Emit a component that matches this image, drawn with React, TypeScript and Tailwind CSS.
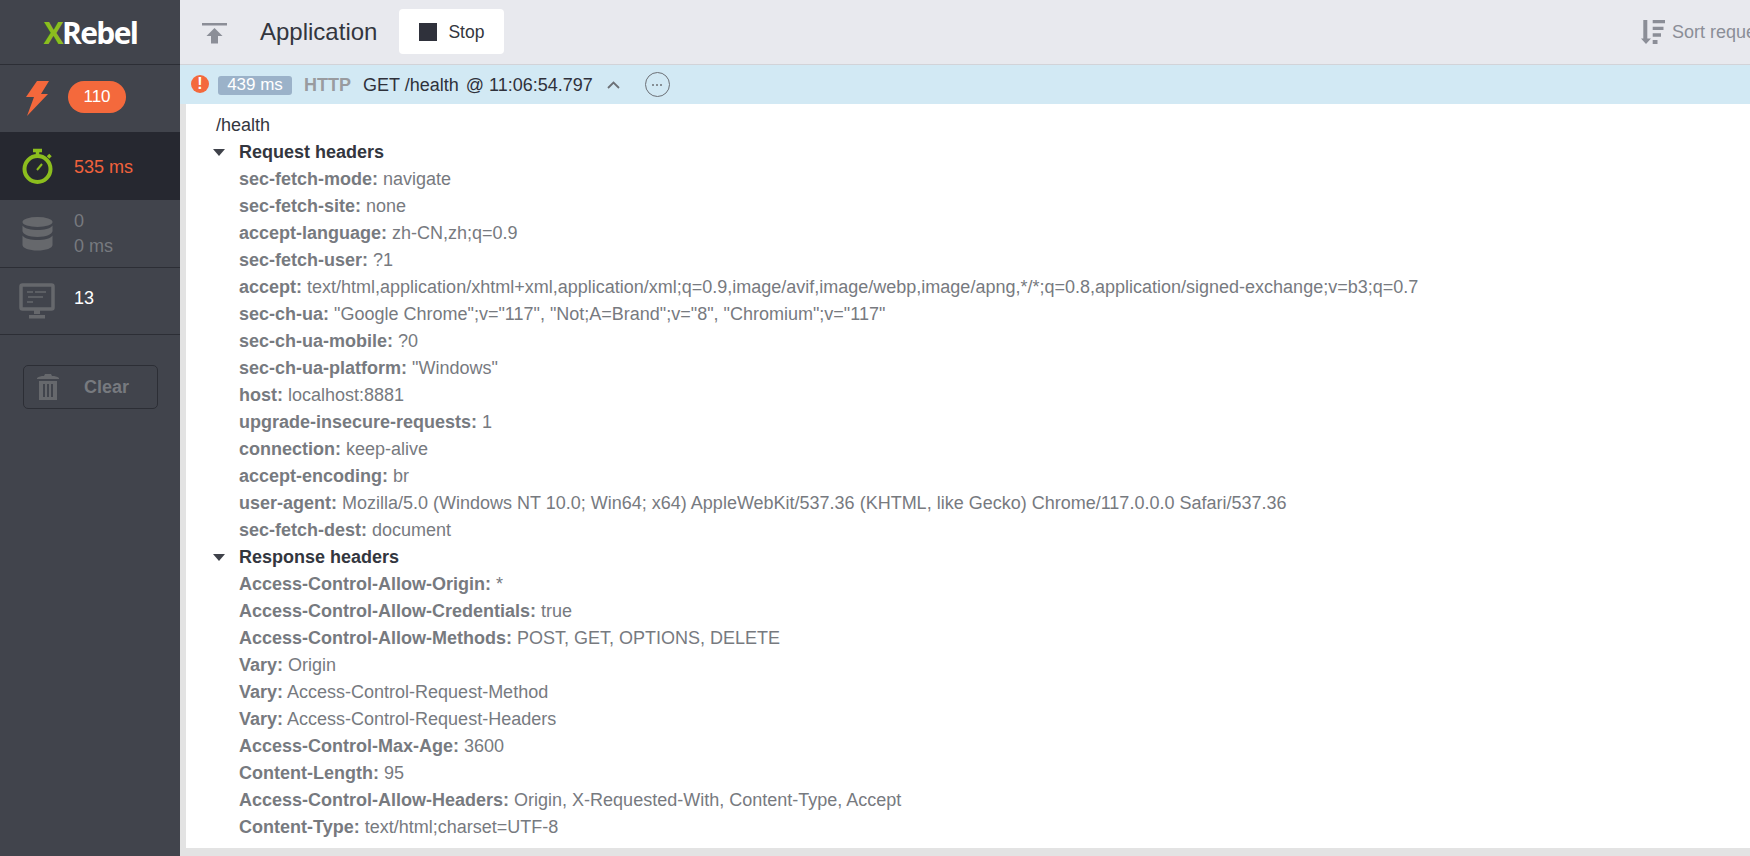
import type { ReactNode } from "react";

const requestHeaders: [string, string][] = [
  ["sec-fetch-mode", "navigate"],
  ["sec-fetch-site", "none"],
  ["accept-language", "zh-CN,zh;q=0.9"],
  ["sec-fetch-user", "?1"],
  ["accept", "text/html,application/xhtml+xml,application/xml;q=0.9,image/avif,image/webp,image/apng,*/*;q=0.8,application/signed-exchange;v=b3;q=0.7"],
  ["sec-ch-ua", "\"Google Chrome\";v=\"117\", \"Not;A=Brand\";v=\"8\", \"Chromium\";v=\"117\""],
  ["sec-ch-ua-mobile", "?0"],
  ["sec-ch-ua-platform", "\"Windows\""],
  ["host", "localhost:8881"],
  ["upgrade-insecure-requests", "1"],
  ["connection", "keep-alive"],
  ["accept-encoding", "br"],
  ["user-agent", "Mozilla/5.0 (Windows NT 10.0; Win64; x64) AppleWebKit/537.36 (KHTML, like Gecko) Chrome/117.0.0.0 Safari/537.36"],
  ["sec-fetch-dest", "document"],
];

const responseHeaders: [string, string][] = [
  ["Access-Control-Allow-Origin", "*"],
  ["Access-Control-Allow-Credentials", "true"],
  ["Access-Control-Allow-Methods", "POST, GET, OPTIONS, DELETE"],
  ["Vary", "Origin"],
  ["Vary", "Access-Control-Request-Method"],
  ["Vary", "Access-Control-Request-Headers"],
  ["Access-Control-Max-Age", "3600"],
  ["Content-Length", "95"],
  ["Access-Control-Allow-Headers", "Origin, X-Requested-With, Content-Type, Accept"],
  ["Content-Type", "text/html;charset=UTF-8"],
];

function HeaderGroup({ title, rows }: { title: string; rows: [string, string][] }) {
  return (
    <div>
      <div className="flex h-[27px] items-center">
        <svg width="12" height="7" viewBox="0 0 12 7" className="ml-[27px] mr-[14px]">
          <path d="M0 0h12L6 7z" fill="#3f424a" />
        </svg>
        <span className="font-bold text-[#33363e]">{title}</span>
      </div>
      {rows.map(([k, v], i) => (
        <div key={i} className="h-[27px] whitespace-nowrap pl-[53px] leading-[27px] text-[#777a7f]">
          <b>{k}:</b> {v}
        </div>
      ))}
    </div>
  );
}

function SideRow({ children, className }: { children: ReactNode; className: string }) {
  return <div className={`flex shrink-0 items-center ${className}`}>{children}</div>;
}

export default function App() {
  return (
    <div className="flex h-[856px] w-[1750px] overflow-hidden bg-[#e3e3e3] font-['Liberation_Sans',Arial,sans-serif] text-[18px]">
      <aside className="flex w-[180px] shrink-0 flex-col bg-[#41444c]">
        <div className="flex h-[65px] shrink-0 items-center justify-center border-b border-[#2c2e35] pl-[1px]">
          <span className="font-['Open_Sans',sans-serif] text-[30px] font-bold tracking-[-1.6px] text-white">
            <span className="text-[#8cbe1e]">X</span>Rebel
          </span>
        </div>
        <SideRow className="h-[67px] pl-[26px]">
          <svg width="23" height="35" viewBox="0 0 23 35">
            <path d="M11 0H23L15 13H22L1 35L8 16H0Z" fill="#f4683c" />
          </svg>
          <span className="mb-[4px] ml-[19px] flex h-[32px] w-[58px] items-center justify-center rounded-full bg-[#f4693c] text-[17px] text-white">110</span>
        </SideRow>
        <SideRow className="h-[68px] bg-[#262830] pl-[22px]">
          <svg width="31" height="36" viewBox="0 0 31 36" fill="none">
            <circle cx="15.5" cy="21" r="13" stroke="#8cbe1e" stroke-width="4" />
            <path d="M11 2.5h9M15.5 3v5M26 7l2.500 2.500" stroke="#8cbe1e" stroke-width="3.5" />
            <path d="M15 22l5-6" stroke="#8cbe1e" stroke-width="2" />
          </svg>
          <span className="ml-[21px] pt-[3px] text-[#f1623c]">535 ms</span>
        </SideRow>
        <SideRow className="h-[68px] border-b border-[#2c2e35] pl-[22px]">
          <svg width="31" height="34" viewBox="0 0 31 34" fill="#66686c">
            <ellipse cx="15.5" cy="5" rx="15" ry="5" />
            <path d="M.5 8.5C3 12 9 13 15.5 13s12.500-1 15-4.500V14c0 3-6.500 6-15 6s-15-3-15-6z" />
            <path d="M.5 18.500C3 22 9 23 15.500 23s12.500-1 15-4.500V28c0 3-6.500 5.500-15 5.500S.5 31 .5 28z" />
          </svg>
          <div className="ml-[21px] text-[#777a7f]">
            <div className="h-[26px] leading-[26px]">0</div>
            <div className="h-[26px] leading-[25px]">0 ms</div>
          </div>
        </SideRow>
        <SideRow className="h-[67px] border-b border-[#2c2e35] pl-[19px]">
          <svg width="36" height="36" viewBox="0 0 36 36" fill="none">
            <rect x="2" y="2" width="32" height="24" rx="1.500" stroke="#66686c" stroke-width="3.500" />
            <path d="M8 9h6M16 9h11M9 14h15M8 19h6" stroke="#66686c" stroke-width="1.500" />
            <path d="M15 27h6v4h-6zM10 32h16v3.500H10z" fill="#66686c" />
          </svg>
          <span className="mb-[5px] ml-[19px] text-white">13</span>
        </SideRow>
        <button className="ml-[23px] mt-[30px] flex h-[44px] w-[135px] items-center rounded-[5px] border border-[#2c2e35] pl-[13px] font-bold text-[#777a7f]">
          <svg width="22" height="26" viewBox="0 0 22 26" fill="#66686c">
            <path d="M8 0h6l1 2c3 0 5 .500 7 2v1H0V4c2-1.500 4-2 7-2z" />
            <path d="M2 7h18v19H2zM6 10v13h2V10zm4 0v13h2V10zm4 0v13h2V10z" fillRule="evenodd" />
          </svg>
          <span className="ml-[25px]">Clear</span>
        </button>
      </aside>

      <main className="flex min-w-0 flex-1 flex-col">
        <header className="flex h-[65px] shrink-0 items-center border-b border-[#d2d3d8] bg-[#e8e9ee] pl-[22px]">
          <svg width="25" height="21" viewBox="0 0 25 21" fill="#8b8e97" className="mt-[3px]">
            <rect width="25" height="2.500" />
            <path d="M12.500 5L20.500 13H16V20.500H9V13H4.500z" />
          </svg>
          <span className="ml-[33px] text-[24px] text-[#33363e]">Application</span>
          <button className="mb-[1px] ml-[22px] flex h-[45px] w-[105px] items-center rounded-[4px] bg-white pl-[20px] text-[17.500px] text-[#33363e]">
            <span className="h-[18px] w-[18px] bg-[#2f313b]" />
            <span className="ml-[11px] pt-[1px]">Stop</span>
          </button>
          <div className="ml-auto flex w-[109px] shrink-0 items-center whitespace-nowrap text-[#8b8e97]">
            <svg width="24" height="24" viewBox="0 0 24 24" fill="#8b8e97" className="shrink-0">
              <path d="M2.300 0h4v18.500H10L5 24 0 18.500h2.300z" />
              <path d="M11.700 0H24v3.300H11.700zM11.700 6.700h10.800V10H11.700zM11.700 13.300H20v3.400h-8.300zM11.700 20h4.800v4h-4.800z" />
            </svg>
            <span className="ml-[7px]">Sort requests</span>
          </div>
        </header>

        <div className="flex h-[39px] shrink-0 items-center whitespace-nowrap bg-[#d2e9f4] pl-[11px] text-[#2f313b]">
          <span className="mb-[2px] flex h-[18px] w-[18px] items-center justify-center rounded-full bg-[#f4693c] text-[16px] font-bold text-white">!</span>
          <span className="ml-[9px] mt-[1px] flex h-[19px] w-[74px] items-center justify-center rounded-[3px] bg-[#9bb2c9] text-[17px] text-white">439 ms</span>
          <span className="ml-[12px] pt-[1px] font-bold text-[#999b9f]">HTTP</span>
          <span className="ml-[12px] pt-[1px]">GET /health</span>
          <span className="ml-[7px] pt-[1px]">@ 11:06:54.797</span>
          <svg width="13" height="8" viewBox="0 0 13 8" fill="none" className="ml-[14px]">
            <path d="M1 7l5.500-5.500L12 7" stroke="#6c7076" stroke-width="1.800" />
          </svg>
          <span className="ml-[25px] flex h-[25px] w-[25px] items-center justify-center gap-[2px] rounded-full border border-[#6c7076]">
            <i className="h-[2px] w-[2px] rounded-full bg-[#6c7076]" />
            <i className="h-[2px] w-[2px] rounded-full bg-[#6c7076]" />
            <i className="h-[2px] w-[2px] rounded-full bg-[#6c7076]" />
          </span>
        </div>

        <section className="mb-[8px] ml-[6px] flex-1 bg-white pt-[8px]">
          <div className="h-[27px] pl-[30px] leading-[27px] text-[#33363e]">/health</div>
          <HeaderGroup title="Request headers" rows={requestHeaders} />
          <HeaderGroup title="Response headers" rows={responseHeaders} />
        </section>
      </main>
    </div>
  );
}
